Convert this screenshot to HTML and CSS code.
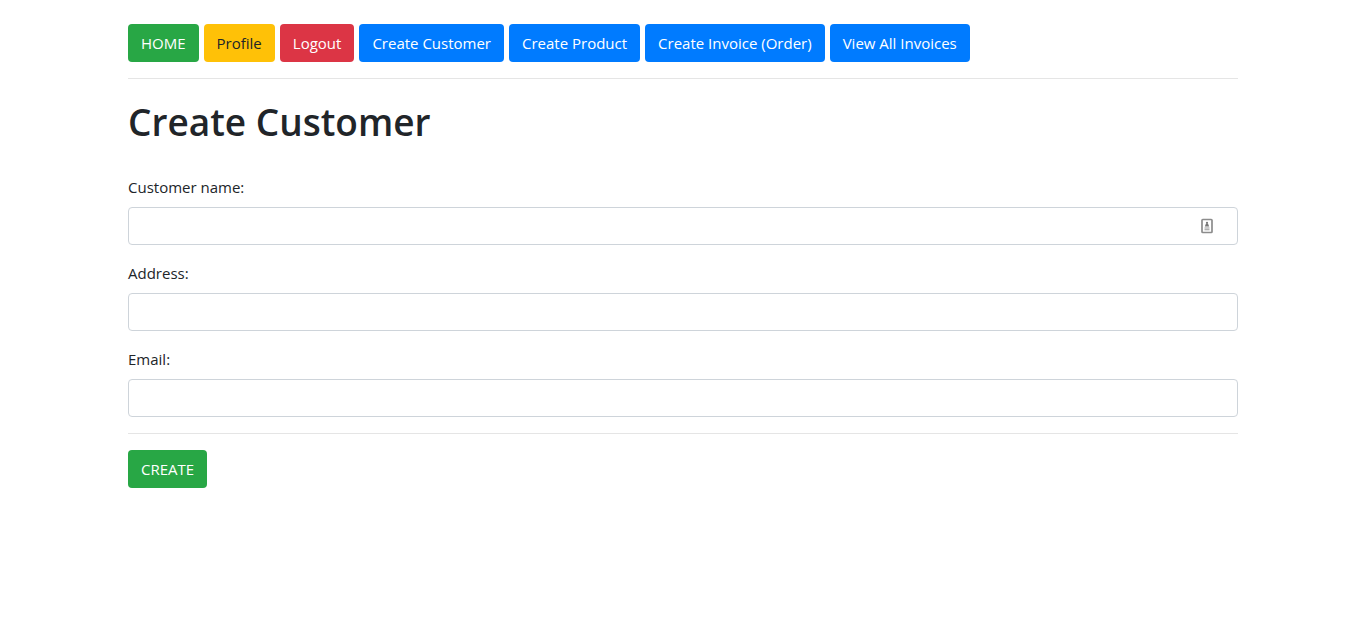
FILE: index.html
```html
<!DOCTYPE html>
<html lang="en">
<head>
<meta charset="utf-8">
<meta name="viewport" content="width=device-width, initial-scale=1">
<title>Create Customer</title>
<link rel="stylesheet" href="styles.css">
</head>
<body>
<div class="container">
  <nav class="nav">
    <a class="btn btn-success" href="#">HOME</a>
    <a class="btn btn-warning" href="#">Profile</a>
    <a class="btn btn-danger" href="#">Logout</a>
    <a class="btn btn-primary" href="#">Create Customer</a>
    <a class="btn btn-primary" href="#">Create Product</a>
    <a class="btn btn-primary" href="#">Create Invoice (Order)</a>
    <a class="btn btn-primary" href="#">View All Invoices</a>
  </nav>
  <hr class="rule">
  <main>
    <h1 class="title">Create Customer</h1>
    <form class="form">
      <div class="field">
        <label class="label" for="name">Customer name:</label>
        <div class="control">
          <input class="input" id="name" type="text">
          <svg class="autofill" viewBox="0 0 12 16" aria-hidden="true">
            <rect x="1" y="1.5" width="10" height="13" rx="0.8" fill="#fff" stroke="#8c8c8c" stroke-width="1.7"/>
            <circle cx="6" cy="4.8" r="1.1" fill="#777"/>
            <path d="M5 5.5h2L8.2 8.5H3.8z" fill="#777"/>
            <path d="M3.5 9.5h5v1h-5zM3.5 11.2h5v1h-5z" fill="#999"/>
          </svg>
        </div>
      </div>
      <div class="field">
        <label class="label" for="address">Address:</label>
        <input class="input" id="address" type="text">
      </div>
      <div class="field">
        <label class="label" for="email">Email:</label>
        <input class="input" id="email" type="email">
      </div>
      <hr class="rule">
      <button class="btn btn-success" type="submit">CREATE</button>
    </form>
  </main>
</div>
</body>
</html>
```
FILE: styles.css
```css
*, *::before, *::after { box-sizing: border-box; }
body {
  margin: 0;
  background: #fff;
  color: #212529;
  font: 400 16px/24px "Segoe UI", "Open Sans", "Noto Sans", sans-serif;
}
.container {
  max-width: 1140px;
  margin: 0 auto;
  padding: 24px 15px;
}
.nav { display: flex; flex-wrap: wrap; gap: 5px; }
.btn {
  display: inline-block;
  padding: 6px 12px;
  border: 1px solid transparent;
  border-radius: 4px;
  color: #fff;
  font: inherit;
  font-size: 15px;
  line-height: 24px;
  text-decoration: none;
  white-space: nowrap;
  cursor: pointer;
}
.btn-success { background: #28a745; }
.btn-warning { background: #ffc107; color: #212529; }
.btn-danger { background: #dc3545; }
.btn-primary { background: #007bff; }
.rule {
  margin: 16px 0;
  border: 0;
  border-top: 1px solid #e5e5e5;
}
.title {
  margin: 0 0 26px;
  font-size: 37px;
  font-weight: 600;
  line-height: 54px;
}
.field { margin-bottom: 16px; }
.label { display: block; margin-bottom: 8px; font-size: 15px; }
.control { position: relative; }
.input {
  display: block;
  width: 100%;
  height: 38px;
  padding: 6px 12px;
  border: 1px solid #ced4da;
  border-radius: 4px;
  background: #fff;
  color: #495057;
  font: inherit;
}
.autofill {
  position: absolute;
  top: 11px;
  right: 25px;
  width: 12px;
  height: 16px;
}
```
